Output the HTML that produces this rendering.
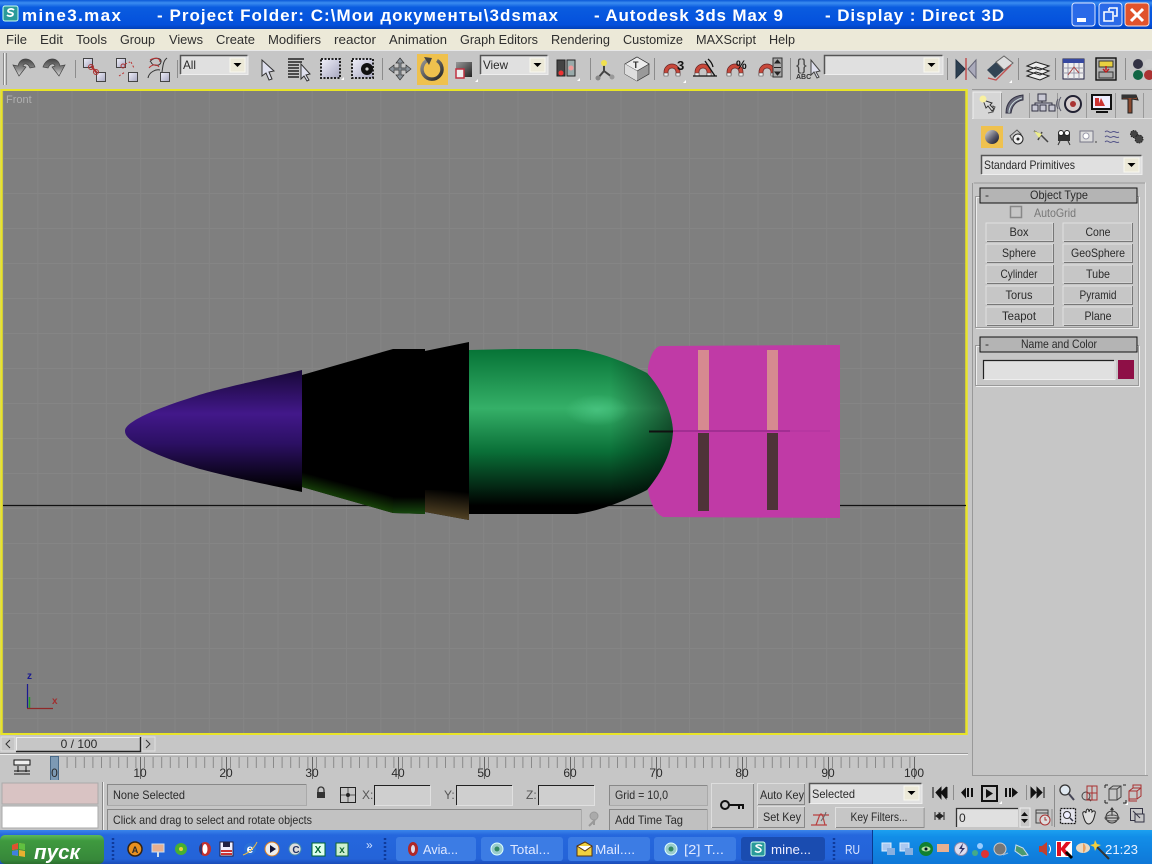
<!DOCTYPE html>
<html><head><meta charset="utf-8"><title>mine3.max - 3ds Max</title>
<style>
html,body{margin:0;padding:0;width:1152px;height:864px;overflow:hidden;background:#c6c6c6}
svg{display:block;position:absolute;left:0;top:0}
text{font-family:"Liberation Sans",sans-serif;font-size:12px;fill:#2a2a2a}
.t{font-weight:bold;font-size:17px;fill:#fff}
.m{font-size:13px;fill:#2e2e2e}
.c{text-anchor:middle}
.w{fill:#fff}
</style></head><body>
<svg width="1152" height="864" viewBox="0 0 1152 864" xmlns="http://www.w3.org/2000/svg">
<defs>
<linearGradient id="tb" x1="0" y1="0" x2="0" y2="1"><stop offset="0" stop-color="#0a58d8"/><stop offset=".1" stop-color="#3b8cf0"/><stop offset=".25" stop-color="#0a5ce0"/><stop offset=".85" stop-color="#0450dc"/><stop offset="1" stop-color="#0340b8"/></linearGradient>
<linearGradient id="task" x1="0" y1="0" x2="0" y2="1"><stop offset="0" stop-color="#3a85ea"/><stop offset=".15" stop-color="#2567dd"/><stop offset=".85" stop-color="#2463d8"/><stop offset="1" stop-color="#1a4cb8"/></linearGradient>
<linearGradient id="tray" x1="0" y1="0" x2="0" y2="1"><stop offset="0" stop-color="#1ca0f0"/><stop offset=".2" stop-color="#128ee8"/><stop offset="1" stop-color="#0f78d8"/></linearGradient>
<linearGradient id="st" x1="0" y1="0" x2="0" y2="1"><stop offset="0" stop-color="#5cb85c"/><stop offset=".2" stop-color="#3f9a3f"/><stop offset=".85" stop-color="#37883a"/><stop offset="1" stop-color="#2a6e2e"/></linearGradient>
<linearGradient id="purple" gradientUnits="userSpaceOnUse" x1="0" y1="370" x2="0" y2="492"><stop offset="0" stop-color="#180838"/><stop offset=".36" stop-color="#42188a"/><stop offset=".6" stop-color="#2c1064"/><stop offset=".97" stop-color="#000"/></linearGradient>
<linearGradient id="green" gradientUnits="userSpaceOnUse" x1="0" y1="349" x2="0" y2="514"><stop offset="0" stop-color="#067336"/><stop offset=".36" stop-color="#35b068"/><stop offset=".62" stop-color="#0a7038"/><stop offset=".95" stop-color="#000"/></linearGradient>
<radialGradient id="hl"><stop offset="0" stop-color="#55d090" stop-opacity=".55"/><stop offset="1" stop-color="#55d090" stop-opacity="0"/></radialGradient>
<linearGradient id="rimg" gradientUnits="userSpaceOnUse" x1="610" y1="0" x2="673" y2="0"><stop offset="0" stop-color="#000" stop-opacity="0"/><stop offset="1" stop-color="#000" stop-opacity=".5"/></linearGradient>
<linearGradient id="og" gradientUnits="userSpaceOnUse" x1="302" y1="472" x2="298" y2="487"><stop offset="0" stop-color="#000"/><stop offset="1" stop-color="#163f08"/></linearGradient>
<linearGradient id="og2" gradientUnits="userSpaceOnUse" x1="447" y1="490" x2="444" y2="516"><stop offset="0" stop-color="#000"/><stop offset="1" stop-color="#4e3f22"/></linearGradient>
<linearGradient id="og3" gradientUnits="userSpaceOnUse" x1="0" y1="497" x2="0" y2="514"><stop offset="0" stop-color="#000"/><stop offset="1" stop-color="#17480e"/></linearGradient>
<linearGradient id="ball" x1="0" y1="0" x2="1" y2="1"><stop offset="0" stop-color="#ddd"/><stop offset=".6" stop-color="#556"/><stop offset="1" stop-color="#112"/></linearGradient>
<linearGradient id="rot" gradientUnits="userSpaceOnUse" x1="422" y1="58" x2="442" y2="80"><stop offset="0" stop-color="#999"/><stop offset="1" stop-color="#222"/></linearGradient>
<linearGradient id="rot2" x1="0" y1="0" x2="1" y2="1"><stop offset="0" stop-color="#999"/><stop offset="1" stop-color="#222"/></linearGradient>
<linearGradient id="blk" x1="0" y1="0" x2="1" y2="1"><stop offset="0" stop-color="#f0f0fa"/><stop offset="1" stop-color="#a8a8c0"/></linearGradient>
<linearGradient id="und" x1="0" y1="0" x2="0" y2="1"><stop offset="0" stop-color="#444"/><stop offset=".55" stop-color="#888"/><stop offset="1" stop-color="#ddd"/></linearGradient>
<pattern id="gridp" patternUnits="userSpaceOnUse" width="34.3" height="35" x="3" y="18"><rect width="34.3" height="35" fill="#7f7f7f"/><path d="M.5 0V35M0 .5H35" stroke="#858585"/></pattern>
<g id="arr"><rect width="15" height="14" fill="#ece9d8" stroke="#f8f8f0"/><path d="M3.500 5h8l-4 4z" fill="#000"/></g>
<g id="sq"><rect width="9" height="9" fill="url(#blk)" stroke="#444"/></g>
<g id="mag"><path d="M0 10a8 8 0 0 1 16 0v3h-4v-3a4 4 0 0 0-8 0v3H0z" fill="#c8483a" stroke="#622" stroke-width=".7"/><rect y="11" width="4" height="3" fill="#eee" stroke="#444" stroke-width=".5"/><rect x="12" y="11" width="4" height="3" fill="#eee" stroke="#444" stroke-width=".5"/></g>
</defs>

<!-- title bar -->
<rect width="1152" height="29" fill="url(#tb)"/>
<rect x="3" y="6" width="15" height="15" rx="2" fill="#2a9a9a" stroke="#cfe"/><path d="M14 10c-2-2-6-1-6 1s5 1 5 3-4 3-6 1" fill="none" stroke="#fff" stroke-width="1.800"/>
<text class="t" x="22" y="21" textLength="99">mine3.max</text>
<text class="t" x="157" y="21" textLength="401">- Project Folder: C:\Мои документы\3dsmax</text>
<text class="t" x="594" y="21" textLength="189">- Autodesk 3ds Max 9</text>
<text class="t" x="825" y="21" textLength="179">- Display : Direct 3D</text>
<rect x="1072" y="3" width="23" height="23" rx="3" fill="#2a6ae8" stroke="#dfe8ff"/><rect x="1077" y="18" width="9" height="4" fill="#fff"/>
<rect x="1099" y="3" width="23" height="23" rx="3" fill="#2a6ae8" stroke="#dfe8ff"/><path d="M1109 8h8v8h-3M1109 8v3M1104 12h9v9h-9z" fill="none" stroke="#fff" stroke-width="1.600"/>
<rect x="1125" y="3" width="24" height="23" rx="3" fill="#e0532c" stroke="#f8e0d8"/><path d="M1131 9l12 12M1143 9l-12 12" stroke="#fff" stroke-width="3"/>

<!-- menu -->
<rect y="29" width="1152" height="21" fill="#ece9d8"/>
<text class="m" x="6" y="44" textLength="21" lengthAdjust="spacingAndGlyphs">File</text>
<text class="m" x="40" y="44" textLength="23" lengthAdjust="spacingAndGlyphs">Edit</text>
<text class="m" x="76" y="44" textLength="31" lengthAdjust="spacingAndGlyphs">Tools</text>
<text class="m" x="120" y="44" textLength="35" lengthAdjust="spacingAndGlyphs">Group</text>
<text class="m" x="169" y="44" textLength="34" lengthAdjust="spacingAndGlyphs">Views</text>
<text class="m" x="216" y="44" textLength="39" lengthAdjust="spacingAndGlyphs">Create</text>
<text class="m" x="268" y="44" textLength="53" lengthAdjust="spacingAndGlyphs">Modifiers</text>
<text class="m" x="334" y="44" textLength="42" lengthAdjust="spacingAndGlyphs">reactor</text>
<text class="m" x="389" y="44" textLength="58" lengthAdjust="spacingAndGlyphs">Animation</text>
<text class="m" x="460" y="44" textLength="78" lengthAdjust="spacingAndGlyphs">Graph Editors</text>
<text class="m" x="551" y="44" textLength="59" lengthAdjust="spacingAndGlyphs">Rendering</text>
<text class="m" x="623" y="44" textLength="60" lengthAdjust="spacingAndGlyphs">Customize</text>
<text class="m" x="696" y="44" textLength="60" lengthAdjust="spacingAndGlyphs">MAXScript</text>
<text class="m" x="769" y="44" textLength="26" lengthAdjust="spacingAndGlyphs">Help</text>

<!-- toolbar base -->
<rect y="50" width="1152" height="40" fill="#c6c6c6"/>
<path d="M0 50.500H1152" stroke="#e8e8e8"/>
<path d="M3.500 53V85M6.500 53V85" stroke="#8a8a8a"/><path d="M4.500 53V85" stroke="#eee"/>
<path d="M75.500 60V78M177.500 60V78M382.500 58V80M590.500 58V80M654.500 58V80M790.500 58V80M947.500 58V80M1018.500 58V80M1055.500 58V80M1125.500 58V80" stroke="#8c8c8c"/>
<!-- undo/redo -->
<path d="M18 66C20 56 32 57 35 67L30 68C28 63 24 63 23 66L26 67L19 76L13 65z" fill="url(#und)" stroke="#444" stroke-width=".7"/>
<path d="M62 66C60 56 48 57 45 67L50 68C52 63 56 63 57 66L54 67L61 76L67 65z" fill="url(#und)" stroke="#444" stroke-width=".7" transform="translate(-2 0)"/>
<!-- link icons -->
<use href="#sq" x="83.500" y="58.500"/><use href="#sq" x="96.500" y="72.500"/><path d="M91 66l6 7" stroke="#b03030" stroke-width="2" fill="none"/><circle cx="91" cy="67" r="2.500" fill="none" stroke="#a33"/><circle cx="96" cy="72" r="2.500" fill="none" stroke="#a33"/>
<use href="#sq" x="116.500" y="58.500"/><use href="#sq" x="128.500" y="72.500"/><path d="M125 64l5-2M119 76l6-4M131 62l3 6" stroke="#b33" stroke-dasharray="2 2" fill="none"/><circle cx="123" cy="66" r="2" fill="none" stroke="#a33"/>
<use href="#sq" x="160.500" y="72.500"/><path d="M150 62c2-5 12-5 11 0s-9 4-10 0M148 78c1-6 8-9 12-8M167 58c-4 3-4 8-5 14" fill="none" stroke="#333"/><path d="M149 68c3-4 8-4 10-1" fill="none" stroke="#b33"/><path d="M150 60c5-3 10-2 10 2" fill="none" stroke="#b33"/>
<!-- All dropdown -->
<rect x="180" y="55" width="68" height="19" fill="#e0e0e0"/><path d="M180.500 74V55.500H247.500" fill="none" stroke="#555" stroke-width="1.500"/><path d="M181 74.500H248V56" fill="none" stroke="#eee"/><use href="#arr" x="230" y="58"/>
<text x="183" y="69" textLength="13" lengthAdjust="spacingAndGlyphs">All</text>
<!-- select arrow -->
<path d="M262 60v16l4-3 3 7 3-1-3-7 5-1z" fill="#dfe0ee" stroke="#333"/>
<!-- select by name -->
<path d="M288 59h16M288 62h14M288 65h11M288 68h11M288 71h11M288 74h11M288 77h11" stroke="#222" stroke-width="1.500"/><path d="M301 64v15l3-3 3 5 2-1-3-5 4-1z" fill="#dfe0ee" stroke="#333"/>
<!-- rect region -->
<rect x="321" y="59" width="19" height="19" fill="url(#blk)" stroke="#222" stroke-width="2" stroke-dasharray="2 1.500"/>
<path d="M341 80h3v-3z" fill="#fff"/>
<!-- window crossing -->
<rect x="352" y="59" width="21" height="19" fill="url(#blk)" stroke="#222" stroke-width="2" stroke-dasharray="2 1.500"/><circle cx="367" cy="69" r="6" fill="#111"/><circle cx="367" cy="69" r="1.600" fill="#ccc"/>
<!-- move -->
<path d="M400 58l4 5h-3v5h5v-3l5 4-5 4v-3h-5v5h3l-4 5-4-5h3v-5h-5v3l-5-4 5-4v3h5v-5h-3z" fill="#8c949c" stroke="#333" stroke-width=".7"/>
<!-- rotate active -->
<rect x="417" y="54" width="31" height="31" fill="#efc14e"/>
<path d="M428 60a10 10 0 1 0 9 .5" fill="none" stroke="url(#rot)" stroke-width="3.500"/><path d="M424 57l8 1-3 7z" fill="#444"/>
<!-- scale -->
<rect x="456" y="62" width="16" height="15" fill="url(#rot2)"/><rect x="456" y="69" width="8" height="9" fill="#eee" stroke="#c03040" stroke-width="1.500"/><path d="M475 82h3v-3z" fill="#fff"/>
<!-- View dropdown -->
<rect x="480" y="55" width="68" height="19" fill="#e0e0e0"/><path d="M480.500 74V55.500H547.500" fill="none" stroke="#555" stroke-width="1.500"/><path d="M481 74.500H548V56" fill="none" stroke="#eee"/><use href="#arr" x="530" y="58"/>
<text x="483" y="69" textLength="25" lengthAdjust="spacingAndGlyphs">View</text>
<!-- pivot -->
<rect x="557" y="60" width="8" height="16" fill="#444" stroke="#222"/><rect x="567" y="60" width="8" height="16" fill="#9aa" stroke="#222"/><circle cx="561" cy="73" r="2.500" fill="#e33"/><circle cx="571" cy="68" r="2.500" fill="#e99"/><path d="M577 81h3v-3z" fill="#fff"/>
<!-- manipulate -->
<path d="M604 71l-6 7M604 71l8 6M604 71V62" stroke="#444" stroke-width="2"/><circle cx="604" cy="63" r="3" fill="#f0e050"/><circle cx="598" cy="78" r="2.500" fill="#888"/><circle cx="612" cy="77" r="2.500" fill="#999"/>
<!-- keyboard -->
<path d="M625 64l12-7 12 7v10l-12 7-12-7z" fill="#999" stroke="#333" stroke-width=".7"/><path d="M625 64l12-7 12 7-12 7z" fill="#ececec" stroke="#333" stroke-width=".7"/><text x="633" y="68" style="font-size:9px;font-weight:bold">T</text><path d="M625 64l12 7v10l-12-7z" fill="#ddd"/>
<!-- snaps -->
<use href="#mag" x="664" y="62"/><text x="677" y="70" style="font-size:13px;font-weight:bold;fill:#111">3</text><path d="M683 83h3v-3z" fill="#fff"/>
<use href="#mag" x="695" y="62"/><path d="M693 76h24M705 61l10 15M708 59a14 14 0 0 1 5 8" fill="none" stroke="#111" stroke-width="1.300"/>
<use href="#mag" x="727" y="62"/><text x="736" y="69" style="font-size:12px;font-weight:bold;fill:#111">%</text>
<use href="#mag" x="759" y="62"/><rect x="773" y="58" width="9" height="19" fill="#aaa" stroke="#333"/><path d="M775 63l2.500-3 2.500 3zM775 72l2.500 3 2.500-3zM774 67.500h7" stroke="#222" fill="#222"/>
<!-- named sel -->
<text x="796" y="70" style="font-size:16px;fill:#444">{}</text><text x="796" y="79" style="font-size:7px;font-weight:bold;fill:#333">ABC</text><path d="M811 60v15l3-3 3 6 2-1-3-5 4-1z" fill="#dfe0ee" stroke="#444"/>
<rect x="824" y="55" width="119" height="19" fill="#e0e0e0"/><path d="M824.500 74V55.500H942.500" fill="none" stroke="#555" stroke-width="1.500"/><path d="M825 74.500H943V56" fill="none" stroke="#eee"/><use href="#arr" x="924" y="58"/>
<!-- mirror / align -->
<path d="M956 60l9 9-9 9z" fill="#2c3f50" stroke="#234"/><path d="M976 60l-8 9 8 9z" fill="#aab" stroke="#667"/><path d="M966 58v22" stroke="#c05050" stroke-width="1.500"/>
<path d="M987 70l9-8 8 8-9 8z" fill="#345"/><path d="M996 62l8-6 9 7-9 7z" fill="#ddd" stroke="#666"/><path d="M988 78l8 2 15-15" stroke="#c05050" fill="none" stroke-width="1.400"/><path d="M1009 83h3v-3z" fill="#fff"/>
<!-- layers -->
<path d="M1027 66l9-4 13 4-9 4zM1027 71l9-4 13 4-9 4zM1027 76l9-4 13 4-9 4z" fill="#eee" stroke="#222"/>
<!-- curve editor -->
<rect x="1063" y="59" width="21" height="20" fill="#eee" stroke="#224"/><rect x="1063" y="59" width="21" height="4" fill="#3648a0"/><path d="M1068 63v16M1063 68h21M1063 73h21M1074 63v16M1079 63v16" stroke="#99a"/><path d="M1068 75l6-8 5 6" fill="none" stroke="#a44"/>
<!-- schematic -->
<rect x="1096" y="58" width="20" height="22" fill="#b0b0b0" stroke="#111" stroke-width="1.400"/><rect x="1099" y="61" width="14" height="6" fill="#e8d040" stroke="#333"/><rect x="1099" y="72" width="14" height="6" fill="#aaa" stroke="#333"/><path d="M1106 66v4m-3-1l3 3 3-3" stroke="#c02020" fill="none" stroke-width="1.500"/>
<!-- material -->
<circle cx="1138" cy="64" r="5" fill="#334"/><circle cx="1149" cy="64" r="5" fill="#ccc"/><circle cx="1138" cy="75" r="5" fill="#164"/><circle cx="1149" cy="75" r="5" fill="#a33"/>

<!-- viewport -->
<rect x="1" y="89" width="966" height="646" fill="url(#gridp)"/>
<path d="M1 90H967M1 734H967" stroke="#e8e428" stroke-width="2"/><path d="M1.500 89V735M966.500 89V735" stroke="#e8e428" stroke-width="2.500"/>
<text x="6" y="103" style="font-size:11px;fill:#b0b0b0">Front</text>
<path d="M3 505.500H966" stroke="#111" stroke-width="1.200"/>
<!-- axes -->
<text x="27" y="679" style="font-size:10px;font-weight:bold;fill:#1a1a90">z</text>
<text x="52" y="704" style="font-size:10px;font-weight:bold;fill:#a03030">x</text>
<path d="M27.500 684V708" stroke="#1a1a90" stroke-width="1.200"/><path d="M29.500 697V708" stroke="#2a9a2a" stroke-width="1.500"/><path d="M27 708.500H53" stroke="#902828" stroke-width="1.200"/>
<!-- pink -->
<path d="M660 346Q652 348 648 367V490Q652 512 663 517L840 518V345z" fill="#c03aa6"/>
<rect x="698" y="350" width="11" height="81" fill="#d68a90"/><rect x="698" y="433" width="11" height="78" fill="#4e3338"/>
<rect x="767" y="350" width="11" height="80" fill="#d68a90"/><rect x="767" y="433" width="11" height="77" fill="#4e3338"/>
<path d="M672 431H790" stroke="#a22e92" stroke-width="2"/><path d="M790 431H830" stroke="#b636a0" stroke-width="1.500"/>
<!-- nose -->
<path d="M302 370C265 379 215 389 190 398C165 406 150 412 137 419C127 425 125 428 125 431C125 435 128 439 137 444C150 452 170 460 190 466C215 474 265 484 302 492z" fill="url(#purple)"/>
<!-- black parts -->
<path d="M302 375L393 349H425L425 351L469 342V520L425 512V514L393 513L302 487z" fill="#000"/>
<path d="M302 472L393 497V513L302 487z" fill="url(#og)"/>
<path d="M393 497H425V514L393 513z" fill="url(#og3)"/>
<path d="M425 490H469V520L425 512z" fill="url(#og2)"/>
<!-- green -->
<path d="M469 350L514 349H577C600 352 625 362 647 373C660 387 672 410 673 431C672 452 662 472 647 490C627 500 600 511 577 514H469z" fill="url(#green)"/>
<path d="M469 350H577C600 352 625 362 647 373C660 387 672 410 673 431C672 452 662 472 647 490C627 500 600 511 577 514H469z" fill="url(#rimg)"/>
<ellipse cx="597" cy="410" rx="32" ry="16" fill="url(#hl)"/>
<path d="M649 431.500H673" stroke="#111" stroke-width="2"/>

<!-- scrollbar -->
<rect y="735" width="970" height="45" fill="#c6c6c6"/>
<rect x="1" y="737" width="14" height="14" fill="#c6c6c6" stroke="#e0e0e0"/><path d="M10 740l-4 4 4 4" fill="none" stroke="#333"/>
<rect x="16" y="737" width="124" height="14" fill="#c6c6c6"/><path d="M16.500 751V737.500H140" fill="none" stroke="#eee"/><path d="M16 751.500H140.500V737" fill="none" stroke="#222" stroke-width="1.400"/>
<text class="c" x="79" y="748">0 / 100</text>
<rect x="142" y="737" width="13" height="14" fill="#c6c6c6" stroke="#e0e0e0"/><path d="M146 740l4 4-4 4" fill="none" stroke="#333"/>
<!-- track -->
<path d="M0 754.500H968" stroke="#f0f0f0"/><path d="M0 753.500H968" stroke="#999"/>
<path d="M58 762.500H916" stroke="#8a8a8a" stroke-width="11" stroke-dasharray="1 7.600"/>
<path d="M58 756.500H916" stroke="#b0b0b0"/>
<path d="M140.500 757V779M226.500 757V779M312.500 757V779M398.500 757V779M484.500 757V779M570.500 757V779M656.500 757V779M742.500 757V779M828.500 757V779M914.500 757V779" stroke="#666"/>
<text class="c" x="140" y="777">10</text><text class="c" x="226" y="777">20</text><text class="c" x="312" y="777">30</text><text class="c" x="398" y="777">40</text><text class="c" x="484" y="777">50</text><text class="c" x="570" y="777">60</text><text class="c" x="656" y="777">70</text><text class="c" x="742" y="777">80</text><text class="c" x="828" y="777">90</text><text class="c" x="914" y="777">100</text>
<rect x="50.500" y="756.500" width="8" height="24" fill="#7d9ab4" stroke="#4a6a88"/><text class="c" x="54.500" y="777">0</text>
<path d="M14 760h16v5H14zM14 774h16M14 771h16" fill="#eee" stroke="#111"/><path d="M18 766v6M26 766v6" stroke="#111"/>

<!-- status -->
<rect y="780" width="970" height="51" fill="#c6c6c6"/>
<rect x="2" y="783" width="96" height="21" fill="#d9c3c3" stroke="#aaa"/>
<rect x="2" y="806" width="96" height="22" fill="#fff" stroke="#aaa"/>
<path d="M102.500 782V830" stroke="#888"/><path d="M103.500 782V830" stroke="#eee"/>
<rect x="107.500" y="784.500" width="199" height="21" fill="#c0c0c0" stroke="#aaa"/><path d="M107.500 805V784.500H306" fill="none" stroke="#888"/>
<text x="113" y="799" textLength="72" lengthAdjust="spacingAndGlyphs">None Selected</text>
<rect x="317" y="792" width="8" height="6" fill="#333"/><path d="M318 792v-2a3 3 0 0 1 6 0v2" fill="none" stroke="#333" stroke-width="1.300"/>
<rect x="340.500" y="787.500" width="15" height="15" fill="#c6c6c6" stroke="#222"/><path d="M348 788v14M341 795h14" stroke="#555"/><circle cx="348" cy="795" r="2" fill="#222"/>
<text x="362" y="799" style="fill:#555">X:</text><text x="444" y="799" style="fill:#555">Y:</text><text x="526" y="799" style="fill:#555">Z:</text>
<rect x="374" y="785" width="56" height="20" fill="#cfcfcf"/><path d="M374.500 805V785.500H430" fill="none" stroke="#222"/><path d="M375 805.500H430.500V786" fill="none" stroke="#e0e0e0"/>
<rect x="456" y="785" width="56" height="20" fill="#cfcfcf"/><path d="M456.500 805V785.500H512" fill="none" stroke="#222"/><path d="M457 805.500H512.500V786" fill="none" stroke="#e0e0e0"/>
<rect x="538" y="785" width="56" height="20" fill="#cfcfcf"/><path d="M538.500 805V785.500H594" fill="none" stroke="#222"/><path d="M539 805.500H594.500V786" fill="none" stroke="#e0e0e0"/>
<rect x="107.500" y="809.500" width="474" height="22" fill="#c2c2c2" stroke="#aaa"/><path d="M107.500 831V809.500H581" fill="none" stroke="#888"/>
<text x="113" y="824" textLength="199" lengthAdjust="spacingAndGlyphs">Click and drag to select and rotate objects</text>
<circle cx="594" cy="816" r="4" fill="#aaa" stroke="#999"/><path d="M589 826l6-6M594 820v5" stroke="#999" stroke-width="2"/>
<rect x="609.500" y="785.500" width="98" height="20" fill="#c0c0c0" stroke="#aaa"/><path d="M609.500 805V785.500H707" fill="none" stroke="#888"/>
<text x="615" y="799" textLength="53" lengthAdjust="spacingAndGlyphs">Grid = 10,0</text>
<rect x="609.500" y="809.500" width="98" height="22" fill="#c0c0c0" stroke="#aaa"/><path d="M609.500 831V809.500H707" fill="none" stroke="#888"/>
<text x="615" y="824" textLength="68" lengthAdjust="spacingAndGlyphs">Add Time Tag</text>
<rect x="711.500" y="783.500" width="42" height="44" fill="#c6c6c6" stroke="#ddd"/><path d="M712 827.500H753.500V784" fill="none" stroke="#8a8a8a"/>
<circle cx="725" cy="805" r="4" fill="none" stroke="#111" stroke-width="2"/><path d="M729 805h15M739 805v4M743 805v4" stroke="#111" stroke-width="2"/>
<rect x="757.500" y="783.500" width="47" height="21" fill="#c6c6c6" stroke="#ddd"/><path d="M758 804.500H804.500V784" fill="none" stroke="#888"/>
<text x="760" y="799" textLength="44" lengthAdjust="spacingAndGlyphs">Auto Key</text>
<rect x="757.500" y="806.500" width="47" height="21" fill="#c6c6c6" stroke="#ddd"/><path d="M758 827.500H804.500V807" fill="none" stroke="#888"/>
<text x="763" y="821" textLength="38" lengthAdjust="spacingAndGlyphs">Set Key</text>
<rect x="809" y="783" width="113" height="20" fill="#e0e0e0"/><path d="M809.500 803V783.500H921.500" fill="none" stroke="#555" stroke-width="1.500"/><path d="M810 803.500H922V784" fill="none" stroke="#eee"/><use href="#arr" x="904" y="786"/>
<text x="812" y="798" textLength="43" lengthAdjust="spacingAndGlyphs">Selected</text>
<path d="M811 825h5l3-8c1-4 3-4 4 0l2 8M813 815h16M811 825h16" fill="none" stroke="#b84040" stroke-width="1.200"/><path d="M826 812c-1 4-3 6-5 9" stroke="#666" fill="none"/>
<rect x="835.500" y="807.500" width="88" height="20" fill="#c6c6c6" stroke="#e0e0e0"/><path d="M836 827.500H924V808" fill="none" stroke="#888"/>
<text class="c" x="879" y="821" textLength="57" lengthAdjust="spacingAndGlyphs">Key Filters...</text>

<!-- transport + nav -->
<rect x="970" y="776" width="182" height="55" fill="#c6c6c6"/>
<path d="M972 89.500H1152" stroke="#999"/>
<path d="M933 787v11M936 792.500l5-5v11zM941 792.500l5-5v11zM947 787v11" fill="#111" stroke="#111"/>
<path d="M961 792.500l5-5v11zM967 788h2v9h-2zM971 788h2v9h-2z" fill="#111"/>
<rect x="982" y="786" width="15" height="15" fill="#c6c6c6" stroke="#111" stroke-width="2"/><path d="M986 789l7 4.500-7 4.500z" fill="#111"/><path d="M999 804h3v-3z" fill="#fff"/>
<path d="M1005 788h2v9h-2zM1009 788h2v9h-2zM1012 787.500l6 5-6 5z" fill="#111"/>
<path d="M1031 787.500l5 5-5 5zM1037 787.500l5 5-5 5zM1044 787v11" fill="#111" stroke="#111"/>
<path d="M953.500 785V800M1026.500 785V800M1054.500 785V827M1052 809V826" stroke="#8c8c8c"/>
<path d="M935 812v8M944 812v8M936 816l4-3v6zM943 816l-4-3v6z" fill="#222" stroke="#222"/>
<rect x="956" y="808" width="62" height="19" fill="#e0e0e0"/><path d="M956.500 827V808.500H1018" fill="none" stroke="#333" stroke-width="1.300"/>
<text x="959" y="822">0</text>
<rect x="1020" y="808" width="10" height="19" fill="#c6c6c6" stroke="#eee"/><path d="M1021 816h7l-3.500-4zM1021 819h7l-3.500 4z" fill="#111"/>
<rect x="1036" y="810" width="12" height="13" fill="#c6c6c6" stroke="#444"/><path d="M1036 813h12" stroke="#444"/><circle cx="1045" cy="820" r="5" fill="#ddd" stroke="#a33"/><path d="M1045 817v3h2" stroke="#a33" fill="none"/>
<!-- nav icons -->
<circle cx="1065" cy="790" r="5" fill="#dfe8f0" stroke="#333" stroke-width="1.300"/><path d="M1069 794l5 6" stroke="#445" stroke-width="2"/>
<circle cx="1086" cy="796" r="4" fill="none" stroke="#444"/><path d="M1089 799l2 2" stroke="#444" stroke-width="1.500"/><path d="M1088 785h10v14h-10zM1088 792h10M1093 785v14" fill="none" stroke="#a83030" transform="translate(-1 1)"/>
<path d="M1109 789l4-3h8v11l-4 3h-8zM1109 789h8v11M1117 789l4-3" fill="none" stroke="#444"/><path d="M1105 785h3M1105 785v3M1123 785h3M1105 803h3M1105 803v-3M1126 800v3h-3" stroke="#222" fill="none"/><path d="M1125 805h3v-3z" fill="#fff"/>
<path d="M1129 791l4-3h8v8l-4 3h-8zM1129 791h8v8M1137 791l4-3M1133 788v-3h8v3M1129 796v5h8" fill="none" stroke="#a83030"/>
<rect x="1060.500" y="808.500" width="15" height="15" fill="#e4e4ec" stroke="#111" stroke-dasharray="2 1" stroke-width="1.300"/><circle cx="1067" cy="815" r="3.500" fill="#eef" stroke="#333"/><path d="M1070 818l3 3" stroke="#334" stroke-width="1.500"/>
<path d="M1083 815c-1-4 2-4 3-2 0-5 3-5 3-1 1-4 3-3 3 0 2-2 4-1 3 2-1 4-2 9-6 10-4 0-5-6-6-9z" fill="#ddd" stroke="#222"/>
<path d="M1106 818h12M1112 808v8" stroke="#333"/><circle cx="1112" cy="817" r="6" fill="none" stroke="#333"/><ellipse cx="1112" cy="818" rx="7" ry="3" fill="none" stroke="#555"/><path d="M1112 807l-2 3h4z" fill="#333"/>
<rect x="1130.500" y="808.500" width="12" height="12" fill="#c6c6c6" stroke="#334"/><rect x="1135" y="814" width="9" height="8" fill="#c6c6c6" stroke="#334"/><path d="M1133 811l7 7" stroke="#334"/>

<!-- right panel -->
<rect x="970" y="90" width="182" height="686" fill="#c6c6c6"/>
<path d="M972.500 183V775.500H1148" fill="none" stroke="#999"/><path d="M973 183H1145.500V775" fill="none" stroke="#e4e4e4"/>
<!-- tabs -->
<path d="M972 118.500H1152" stroke="#e0e0e0"/>
<rect x="973" y="92" width="28" height="27" fill="#d6d6d6"/><path d="M973 119V92H1001V119" fill="none" stroke="#eee"/>
<path d="M1001.500 93V118M1029.500 93V118M1057.500 93V118M1086.500 93V118M1115.500 93V118M1143.500 93V118" stroke="#999"/>
<path d="M981 99l12 12v-5l2 1-2 5-5 1" fill="none" stroke="#555"/><path d="M983 100l3 8 2-2 4 5 2-2-4-4 2-2z" fill="#ddd" stroke="#333"/><circle cx="983" cy="99" r="3.500" fill="#f8f0a0"/>
<path d="M1006 113c0-10 6-17 17-18v5c-7 1-11 6-12 13z" fill="#667" stroke="#334"/><path d="M1009 113c0-7 5-13 13-15" stroke="#cdd" fill="none"/>
<path d="M1038 94h8v7h-8zM1032 105h6v6h-6zM1040 105h6v6h-6zM1049 105h6v6h-6zM1042 101v2M1035 105v-2h17v2" fill="#c8c8d4" stroke="#334"/>
<circle cx="1073" cy="104" r="8" fill="#d8d0d0" stroke="#223" stroke-width="2"/><circle cx="1073" cy="104" r="3" fill="#a33"/><path d="M1061 97a12 12 0 0 0 0 14M1058 99a10 10 0 0 0 0 10" fill="none" stroke="#556"/>
<rect x="1092" y="95" width="19" height="14" fill="#eef" stroke="#111" stroke-width="2"/><path d="M1098 106l3-8 4 8zM1095 98h4v8h-4z" fill="#c33"/><path d="M1096 112h12" stroke="#111" stroke-width="2"/>
<path d="M1122 95h14l2 5-6-1v14h-4V99h-6z" fill="#8a4a30" stroke="#222"/><path d="M1122 95h14v3h-14z" fill="#333"/>
<!-- row 2 -->
<rect x="981" y="126" width="22" height="22" fill="#efc14e"/><circle cx="992" cy="137" r="7" fill="url(#ball)"/>
<path d="M1010 136l7-6 4 4v6h-9z" fill="#c8c8c8" stroke="#555"/><circle cx="1018" cy="139" r="5" fill="#eee" stroke="#222"/><circle cx="1018" cy="139" r="1.500" fill="#222"/>
<path d="M1034 131l7 4 7 7M1042 132l-4 8" stroke="#444" fill="none" stroke-width="1.500"/><path d="M1034 131l8 3-3 4z" fill="#ee8"/>
<rect x="1058" y="134" width="12" height="7" fill="#333"/><circle cx="1061" cy="133" r="2.500" fill="#fff" stroke="#222"/><circle cx="1067" cy="133" r="2.500" fill="#fff" stroke="#222"/><path d="M1060 141l-2 4M1068 141l2 4" stroke="#333"/>
<rect x="1080" y="131" width="13" height="11" fill="#ddd" stroke="#778"/><circle cx="1086" cy="136" r="3" fill="#fff" stroke="#99a"/><path d="M1095 142h2" stroke="#444"/>
<path d="M1105 132c3-3 4 2 7 0s4 2 7 0M1105 137c3-3 4 2 7 0s4 2 7 0M1105 142c3-3 4 2 7 0s4 2 7 0" fill="none" stroke="#558"/>
<circle cx="1134" cy="134" r="3.500" fill="#444" stroke="#222" stroke-dasharray="1.500 1"/><circle cx="1139" cy="139" r="4" fill="#444" stroke="#222" stroke-dasharray="1.500 1"/>
<!-- Standard Primitives -->
<rect x="981" y="155" width="161" height="19" fill="#e0e0e0"/><path d="M981.500 174V155.500H1141.500" fill="none" stroke="#555" stroke-width="1.500"/><path d="M982 174.500H1142V156" fill="none" stroke="#eee"/><use href="#arr" x="1124" y="158"/>
<text x="984" y="169" textLength="91" lengthAdjust="spacingAndGlyphs">Standard Primitives</text>
<!-- rollouts -->
<path d="M973.500 183H1145" stroke="#999"/>
<rect x="976.500" y="197.500" width="163" height="131" fill="none" stroke="#eee"/><rect x="975.500" y="196.500" width="163" height="131" fill="none" stroke="#999"/>
<rect x="980" y="188" width="157" height="15" fill="#b4b4b4" stroke="#111"/>
<text x="985" y="199">-</text><text class="c" x="1059" y="199" textLength="58" lengthAdjust="spacingAndGlyphs">Object Type</text>
<rect x="1010.500" y="206.500" width="11" height="11" fill="#c6c6c6" stroke="#888" stroke-width="1.500"/>
<text x="1034" y="217" style="fill:#777" textLength="42" lengthAdjust="spacingAndGlyphs">AutoGrid</text>
<g fill="#c6c6c6" stroke="#e0e0e0">
<rect x="986" y="223" width="67" height="18"/><rect x="1063" y="223" width="69" height="18"/>
<rect x="986" y="244" width="67" height="18"/><rect x="1063" y="244" width="69" height="18"/>
<rect x="986" y="265" width="67" height="18"/><rect x="1063" y="265" width="69" height="18"/>
<rect x="986" y="286" width="67" height="18"/><rect x="1063" y="286" width="69" height="18"/>
<rect x="986" y="307" width="67" height="18"/><rect x="1063" y="307" width="69" height="18"/>
</g>
<path d="M987 241.500H1053.500V223M1064 241.500H1132.500V223M987 262.500H1053.500V244M1064 262.500H1132.500V244M987 283.500H1053.500V265M1064 283.500H1132.500V265M987 304.500H1053.500V286M1064 304.500H1132.500V286M987 325.500H1053.500V307M1064 325.500H1132.500V307" fill="none" stroke="#777"/>
<text class="c" x="1019" y="236" textLength="19" lengthAdjust="spacingAndGlyphs">Box</text><text class="c" x="1098" y="236" textLength="25" lengthAdjust="spacingAndGlyphs">Cone</text>
<text class="c" x="1019" y="257" textLength="34" lengthAdjust="spacingAndGlyphs">Sphere</text><text class="c" x="1098" y="257" textLength="54" lengthAdjust="spacingAndGlyphs">GeoSphere</text>
<text class="c" x="1019" y="278" textLength="37" lengthAdjust="spacingAndGlyphs">Cylinder</text><text class="c" x="1098" y="278" textLength="24" lengthAdjust="spacingAndGlyphs">Tube</text>
<text class="c" x="1019" y="299" textLength="27" lengthAdjust="spacingAndGlyphs">Torus</text><text class="c" x="1098" y="299" textLength="37" lengthAdjust="spacingAndGlyphs">Pyramid</text>
<text class="c" x="1019" y="320" textLength="34" lengthAdjust="spacingAndGlyphs">Teapot</text><text class="c" x="1098" y="320" textLength="27" lengthAdjust="spacingAndGlyphs">Plane</text>
<rect x="976.500" y="346.500" width="163" height="40" fill="none" stroke="#eee"/><rect x="975.500" y="345.500" width="163" height="40" fill="none" stroke="#999"/>
<rect x="980" y="337" width="157" height="15" fill="#b4b4b4" stroke="#111"/>
<text x="985" y="348">-</text><text class="c" x="1059" y="348" textLength="76" lengthAdjust="spacingAndGlyphs">Name and Color</text>
<rect x="983" y="360" width="131" height="19" fill="#e0e0e0"/><path d="M983.500 379V360.500H1114" fill="none" stroke="#222" stroke-width="1.200"/><path d="M984 379.500H1115V361" fill="none" stroke="#eee"/>
<rect x="1118" y="360" width="16" height="19" fill="#8e0f46"/>

<!-- taskbar -->
<rect y="830" width="1152" height="34" fill="url(#task)"/>
<rect x="0" y="835" width="104" height="29" rx="5" fill="url(#st)"/>
<path d="M12 845l6-2v6l-6 1zM19 843l6 1v6l-6-1zM12 851l6-1v6l-6-1zM19 850l6 1v6l-6-1z" fill="#e8b030"/><path d="M12 845l6-2v6l-6 1z" fill="#e05030"/><path d="M19 843l6 1v6l-6-1z" fill="#60c040"/><path d="M12 851l6-1v6l-6-1z" fill="#4080e0"/>
<text x="34" y="859" style="font-size:20px;font-weight:bold;font-style:italic;fill:#fff" textLength="46" lengthAdjust="spacingAndGlyphs">пуск</text>
<path d="M113 838V860M385 838V860M834 838V860" stroke="#0f3a9a" stroke-width="2.500" stroke-dasharray="2 2"/>
<!-- quick launch -->
<circle cx="135" cy="849" r="7" fill="#e89020" stroke="#321" stroke-width="1.500"/><text class="c" x="135" y="853" style="font-size:9px;font-weight:bold">A</text>
<rect x="152" y="844" width="12" height="8" fill="#e8b090" stroke="#cde"/><path d="M158 852v5" stroke="#cde" stroke-width="2"/>
<circle cx="181" cy="849" r="6" fill="#48b030"/><circle cx="181" cy="849" r="2" fill="#e8d040"/>
<ellipse cx="205" cy="849" rx="6" ry="7" fill="#c03030"/><ellipse cx="205" cy="849" rx="2.500" ry="5" fill="#fff"/><path d="M199 849a6 7 0 0 1 3-6v12a6 7 0 0 1-3-6z" fill="#336"/>
<rect x="220" y="842" width="13" height="14" fill="#eef" stroke="#224"/><rect x="223" y="842" width="7" height="5" fill="#224"/><path d="M221 851h11M221 854h11" stroke="#c33" stroke-width="2"/>
<circle cx="250" cy="849" r="6" fill="#2a70d8"/><text class="c" x="250" y="853" style="font-size:12px;font-weight:bold;fill:#fff">e</text><path d="M243 855c6-2 12-8 14-13" stroke="#f0c040" fill="none"/>
<circle cx="272" cy="849" r="7" fill="#eee" stroke="#e08020"/><path d="M270 845l6 4-6 4z" fill="#113"/>
<circle cx="295" cy="849" r="6" fill="#ddd" stroke="#48a"/><text class="c" x="296" y="853" style="font-size:10px;font-weight:bold;fill:#236">C</text>
<rect x="312" y="843" width="13" height="13" fill="#dfe" stroke="#063"/><text class="c" x="318" y="853" style="font-size:10px;font-weight:bold;fill:#063">X</text>
<rect x="336" y="843" width="12" height="13" fill="#cdf0d0" stroke="#163"/><text class="c" x="342" y="853" style="font-size:10px;font-weight:bold;fill:#163">x</text>
<text x="366" y="849" style="font-size:12px;fill:#cfe0ff">»</text>
<!-- tasks -->
<rect x="396" y="837" width="80" height="24" rx="3" fill="#3c7ce4"/>
<rect x="481" y="837" width="82" height="24" rx="3" fill="#3c7ce4"/>
<rect x="568" y="837" width="82" height="24" rx="3" fill="#3c7ce4"/>
<rect x="654" y="837" width="82" height="24" rx="3" fill="#3c7ce4"/>
<rect x="741" y="837" width="84" height="24" rx="3" fill="#1a4cb0"/>
<ellipse cx="413" cy="849" rx="5" ry="7" fill="#b02828"/><ellipse cx="413" cy="849" rx="2" ry="4" fill="#dde"/>
<text x="423" y="854" style="font-size:13px;fill:#dfe8ff" textLength="35" lengthAdjust="spacingAndGlyphs">Avia...</text>
<circle cx="497" cy="849" r="6" fill="#9cc" stroke="#dff"/><circle cx="497" cy="849" r="2.500" fill="#386"/>
<text x="510" y="854" style="font-size:13px;fill:#dfe8ff" textLength="40" lengthAdjust="spacingAndGlyphs">Total...</text>
<path d="M577 846l8-4 7 4v10h-15z" fill="#f0d040" stroke="#531"/><path d="M577 846l8 5 7-5" fill="#fff" stroke="#531"/>
<text x="595" y="854" style="font-size:13px;fill:#dfe8ff" textLength="40" lengthAdjust="spacingAndGlyphs">Mail....</text>
<circle cx="671" cy="849" r="6" fill="#9cc" stroke="#dff"/><circle cx="671" cy="849" r="2.500" fill="#386"/>
<text x="684" y="854" style="font-size:13px;fill:#dfe8ff" textLength="40" lengthAdjust="spacingAndGlyphs">[2] T...</text>
<rect x="751" y="842" width="14" height="14" rx="2" fill="#2a9a9a" stroke="#cfe"/><path d="M762 846c-2-2-6-1-6 0s5 2 5 4-4 3-6 1" fill="none" stroke="#fff" stroke-width="1.500"/>
<text x="771" y="854" style="font-size:13px;fill:#eef" textLength="40" lengthAdjust="spacingAndGlyphs">mine...</text>
<text x="845" y="854" style="font-size:13px;fill:#dfe8ff" textLength="15" lengthAdjust="spacingAndGlyphs">RU</text>
<!-- tray -->
<rect x="872" y="830" width="280" height="34" fill="url(#tray)"/><path d="M872.500 830V864" stroke="#0a3a90"/>
<rect x="882" y="843" width="9" height="8" fill="#aac8f0" stroke="#e0f0ff"/><rect x="887" y="848" width="8" height="7" fill="#88b0e0"/><rect x="900" y="843" width="9" height="8" fill="#aac8f0" stroke="#e0f0ff"/><rect x="905" y="848" width="8" height="7" fill="#88b0e0"/>
<circle cx="926" cy="849" r="7" fill="#108030"/><ellipse cx="926" cy="849" rx="4.500" ry="2.500" fill="#b0e0a0"/><circle cx="926" cy="849" r="1.500" fill="#012"/>
<rect x="937" y="844" width="12" height="8" fill="#e8b090"/><circle cx="961" cy="849" r="6.500" fill="#dde" stroke="#88a"/><path d="M963 843l-4 6h3l-3 6 6-7h-3z" fill="#336"/>
<circle cx="980" cy="846" r="3" fill="#9cf"/><circle cx="975" cy="853" r="3" fill="#4a8"/><circle cx="985" cy="854" r="4" fill="#d33"/>
<circle cx="1000" cy="849" r="6" fill="#777" stroke="#ccc"/><path d="M1003 855l5-2" stroke="#9bd"/>
<path d="M1016 845l7 3 5 7-6 1-7-5z" fill="#4a9a70" stroke="#cde"/>
<path d="M1039 846h3l5-4v14l-5-4h-3z" fill="#c04030"/><path d="M1049 845a6 6 0 0 1 0 8" stroke="#fff" fill="none"/>
<rect x="1056" y="841" width="16" height="16" fill="#fff"/><path d="M1057 842h4v6l5-6h5l-6 7 6 7h-5l-5-6v6h-4z" fill="#e01020"/><path d="M1066 852l6 6" stroke="#000" stroke-width="3"/>
<ellipse cx="1083" cy="848" rx="7" ry="5" fill="#e8d8c0"/><path d="M1083 843a6 6 0 0 1 0 10z" fill="#e8a060"/>
<path d="M1095 845l14 14" stroke="#333" stroke-width="2"/><path d="M1095 840l2 4 4 1-4 2-2 4-1-4-4-2 4-1z" fill="#f0d040"/>
<text x="1105" y="854" style="font-size:13px;fill:#e8f0ff" textLength="33" lengthAdjust="spacingAndGlyphs">21:23</text>
</svg>
</body></html>
